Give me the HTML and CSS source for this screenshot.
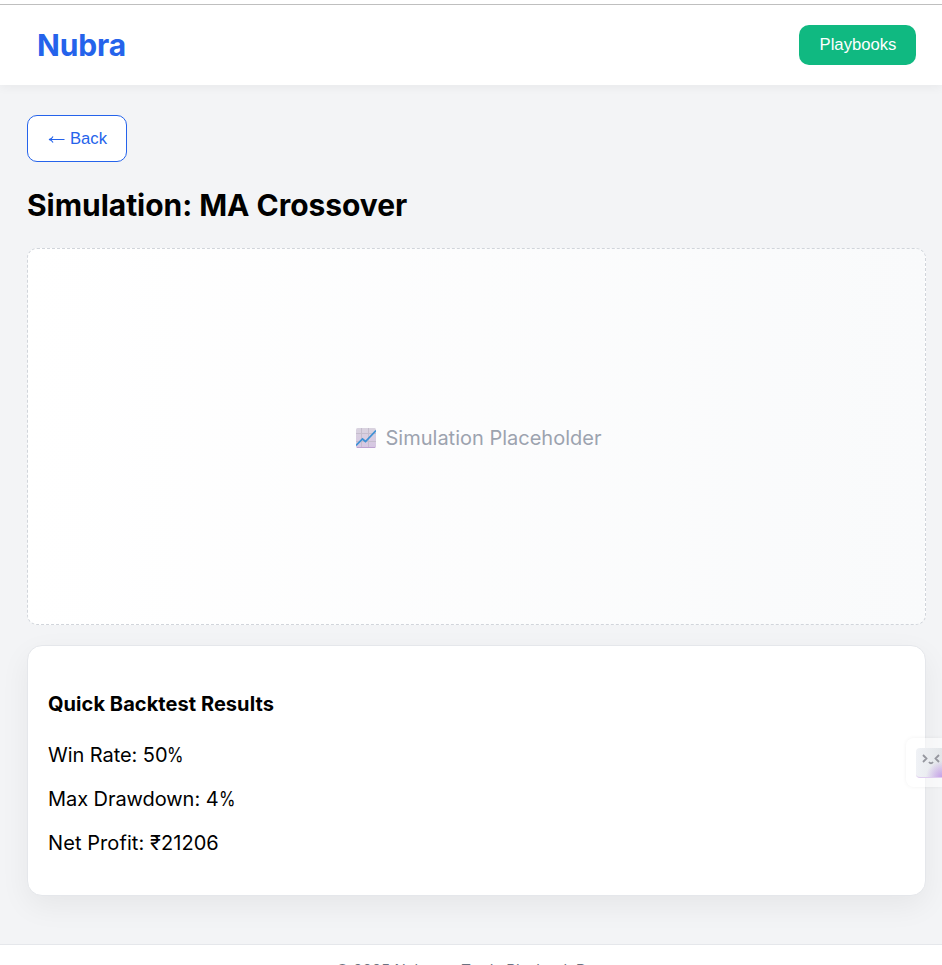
FILE: index.html
```html
<!DOCTYPE html>
<html lang="en">
<head>
<meta charset="utf-8">
<title>Nubra</title>
<link rel="stylesheet" href="styles.css">
</head>
<body>
<header class="topbar">
  <div class="brand">Nubra</div>
  <button class="btn btn-primary">Playbooks</button>
</header>
<main class="content">
  <button class="btn btn-back"><svg class="arrow" width="17" height="10" viewBox="0 0 17 10"><path d="M16.500 5.500H1.500M5 2.500Q4 4.800 1 5.500Q4 6.200 5 8.500" fill="none" stroke="currentColor" stroke-width="1.100"/></svg>Back</button>
  <h1 class="title">Simulation: MA Crossover</h1>
  <section class="placeholder">
    <svg class="chart" width="20" height="20" viewBox="0 0 20 20">
      <defs><linearGradient id="paper" x1="0" y1="0" x2="0" y2="1"><stop offset="0" stop-color="#d9d3df"/><stop offset="1" stop-color="#d6c6e3"/></linearGradient></defs>
      <rect width="20" height="20" rx="1.500" fill="url(#paper)"/>
      <path d="M5.500 0V20M12.500 0V20M0 5.500H20M0 13.500H20" stroke="#c5bdcd" stroke-width="1"/>
      <path d="M1 19.500H19" stroke="#bda2d1"/>
      <path d="M0 17.500L6.500 11L9.500 13.500L20 2.500" fill="none" stroke="#3d91d5" stroke-width="1.700"/>
    </svg>
    <span>Simulation Placeholder</span>
  </section>
  <section class="card">
    <h3 class="card-title">Quick Backtest Results</h3>
    <p class="stat stat-percent">Win Rate: 50<span class="pct">%</span></p>
    <p class="stat stat-percent">Max Drawdown: 4<span class="pct">%</span></p>
    <p class="stat stat-money">Net Profit: ₹21206</p>
  </section>
</main>
<footer class="footer">© 2025 Nubra — Trade Playbook Demo</footer>
<div class="widget">
  <div class="widget-face">
    <svg width="26" height="30" viewBox="0 0 26 30"><path d="M7 8L10.500 11.500L7 15M23 8L19.500 11.500L23 15M13 15Q15 17.500 17 15" fill="none" stroke="#96979f" stroke-width="1.800"/></svg>
  </div>
</div>
</body>
</html>
```
FILE: styles.css
```css
* { box-sizing: border-box; }
html { overflow: hidden; }
body {
  margin: 0;
  height: 965px;
  overflow: hidden;
  position: relative;
  background: #f3f4f6;
  color: #000;
  font: 20px/24px Inter, sans-serif;
}
.topbar {
  display: flex;
  align-items: center;
  justify-content: space-between;
  height: 85px;
  padding: 5px 26px 0 37px;
  background: linear-gradient(#fff 4px, #bfbfbf 4px, #bfbfbf 5px, #fff 5px);
  box-shadow: 0 2px 10px rgba(0, 0, 0, .05);
}
.brand { color: #2563eb; font-size: 30px; font-weight: 700; line-height: 36px; letter-spacing: -.15px; }
.btn { font: 16.667px/19px "Liberation Sans", sans-serif; border-radius: 10px; }
.btn-primary { width: 117px; height: 40px; padding: 0 0 2px 1px; border: 0; color: #fff; background: #10b981; }
.content { padding: 30px 16px 0 27px; }
.btn-back {
  display: flex;
  align-items: center;
  justify-content: center;
  gap: 5px;
  width: 100px;
  height: 47px;
  padding: 0 0 0 1px;
  border: 1px solid #2563eb;
  color: #2563eb;
  background: #fff;
}
.title { margin: 25px 0 24px; font-size: 30px; line-height: 37px; font-weight: 700; letter-spacing: -.04px; }
.placeholder {
  display: flex;
  align-items: center;
  justify-content: center;
  gap: 10px;
  height: 377px;
  padding: 3px 0 0 4px;
  border: 1px dashed #d1d5db;
  border-radius: 10px;
  background: linear-gradient(90deg, #fff, #f9fafb);
  color: #9ca3af;
}
.card {
  height: 251px;
  margin-top: 20px;
  padding: 46px 20px 0;
  border: 1px solid #e5e7eb;
  border-radius: 15px;
  background: #fff;
  box-shadow: 0 10px 30px rgba(0, 0, 0, .06);
}
.card-title { margin: 0 0 27px; font-size: 20px; line-height: 24px; font-weight: 700; letter-spacing: .06px; }
.stat { margin: 0 0 20px; }
.stat-percent { letter-spacing: -.06px; }
.pct { display: inline-block; transform: scaleX(.84); transform-origin: left; }
.stat-money { letter-spacing: .08px; }
.footer {
  margin-top: 48px;
  padding-top: 15px;
  height: 60px;
  border-top: 1px solid #e5e7eb;
  background: #fff;
  color: #6b7280;
  font-size: 15px;
  line-height: 20px;
  text-align: center;
  padding-left: 11px;
}
.widget {
  position: absolute;
  top: 738px;
  right: 0;
  width: 36px;
  height: 49px;
  padding: 10px 0 0 10px;
  border-radius: 8px 0 0 8px;
  background: rgba(255, 255, 255, .5);
  box-shadow: 0 0 4px rgba(0, 0, 0, .06);
}
.widget-face {
  height: 30px;
  border-radius: 4px 0 0 4px;
  overflow: hidden;
  background: radial-gradient(circle at 100% 100%, #c5a0e8, transparent 16px), linear-gradient(90deg, #f0f2f6, #e3e6e9);
  border-bottom: 1px solid #dfcdef;
}
.widget-face svg { display: block; margin-top: -1px; }
```
